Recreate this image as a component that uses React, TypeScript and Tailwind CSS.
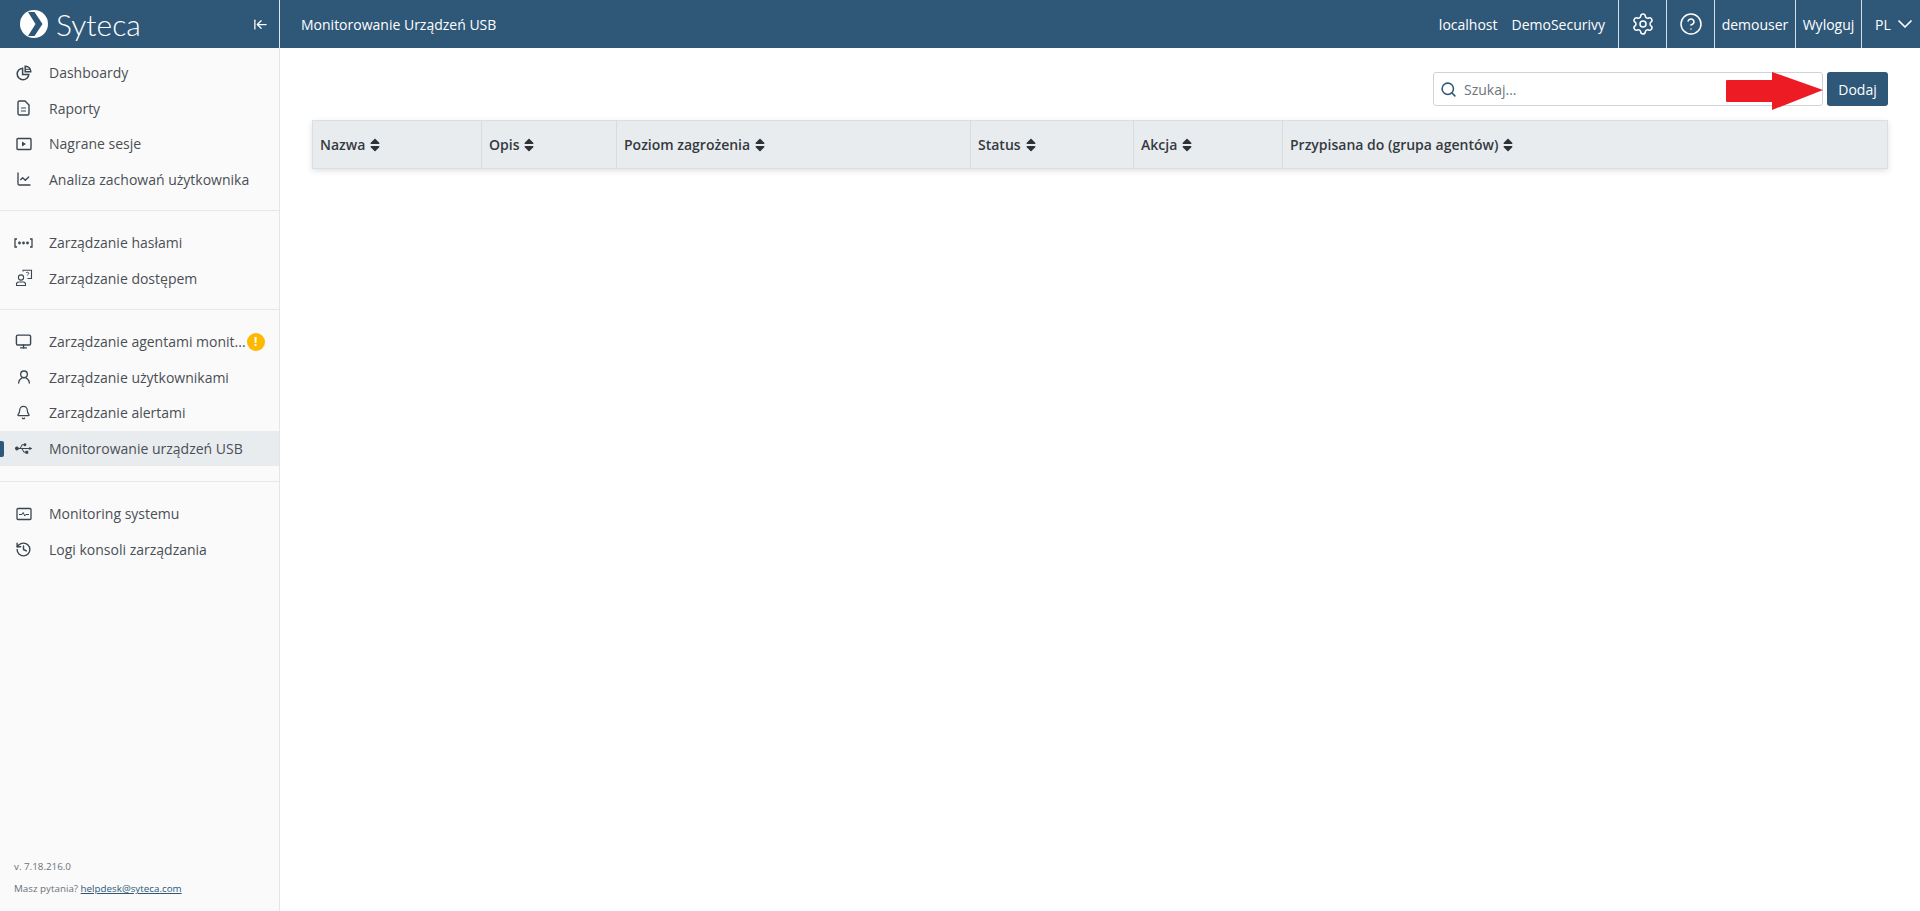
import { ArrowLeftToLine, Bell, ChartLine, ChevronDown, CircleHelp, History, Monitor, Search, Settings, UserRound } from "lucide-react";
import type { ReactNode } from "react";
import { FaSort, FaUsb } from "react-icons/fa";

function PieIcon() {
    return (
        <svg width="16" height="16" viewBox="0 0 16 16" fill="none" stroke="currentColor" strokeWidth="1.5">
            <path d="M6.600 3.200a5.800 5.800 0 1 0 6.200 6.200H6.600z" />
            <path d="M9.200 1.200a5.400 5.400 0 0 1 5.600 5.600H9.200z" />
            <path d="M9.500 4.300h5" strokeWidth="1" />
        </svg>
    );
}

function ReportIcon() {
    return (
        <svg width="13" height="16" viewBox="0 0 13 16" fill="none" stroke="currentColor" strokeWidth="1.4">
            <path d="M2.500 1h5.500l4 4v8.500a1.500 1.500 0 0 1-1.500 1.500h-8A1.500 1.500 0 0 1 1 13.500v-11A1.500 1.500 0 0 1 2.500 1z" />
            <path d="M4 8h5M4 11h5" strokeWidth="1.200" />
        </svg>
    );
}

function PlayBoxIcon() {
    return (
        <svg width="16" height="14" viewBox="0 0 16 14" fill="none">
            <rect x="1" y="1.500" width="14" height="11" rx="1" stroke="currentColor" strokeWidth="1.400" />
            <path d="M6 4.500v5l4-2.500z" fill="currentColor" />
        </svg>
    );
}

function PulseBoxIcon() {
    return (
        <svg width="16" height="14" viewBox="0 0 16 14" fill="none">
            <rect x="1" y="1.500" width="14" height="11" rx="1" stroke="currentColor" strokeWidth="1.300" />
            <path d="M3 7.500h3l1.200-2 1.600 3.500 1-1.500H13" stroke="currentColor" strokeWidth="1" />
        </svg>
    );
}

function PasswordIcon() {
    return (
        <svg width="19" height="10" viewBox="0 0 19 10" fill="none" stroke="currentColor" strokeWidth="1.300">
            <path d="M3 1H1v8h2M16 1h2v8h-2" />
            <circle cx="5.500" cy="5" r="1.400" fill="currentColor" stroke="none" />
            <circle cx="9.500" cy="5" r="1.400" fill="currentColor" stroke="none" />
            <circle cx="13.500" cy="5" r="1.400" fill="currentColor" stroke="none" />
        </svg>
    );
}

function AccessIcon() {
    return (
        <svg width="18" height="18" viewBox="0 0 18 18" fill="none" stroke="currentColor" strokeWidth="1.100">
            <circle cx="6" cy="8.500" r="2.600" />
            <path d="M1.500 16.500v-1.200c0-1.500 1-2.300 2.300-2.300h4.400c1.300 0 2.300.8 2.300 2.300v1.200z" />
            <path d="M8 2.500V1.200h8.500v8.300h-4" />
            <path d="M11 4c.4-1 2.600-1 2.800.2.200 1-1.400 1.100-1.400 2.200" strokeWidth="1" />
        </svg>
    );
}

function NavItem({ icon, label, active, badge }: { icon: ReactNode; label: string; active?: boolean; badge?: boolean }) {
    return (
        <div className={`relative flex h-[35.5px] items-center ${active ? "bg-[#e9ecef]" : ""}`}>
            {active && <span className="absolute left-0 top-[10px] h-[16px] w-[4px] rounded-r-[2px] bg-[#2f5777]"></span>}
            <span className="flex w-[49px] shrink-0 justify-center pr-[2px] text-[#3a4650]">{icon}</span>
            <span className="text-[14px] text-[#4a4f55]">{label}</span>
            {badge && (
                <span className="ml-[1px] flex h-[18px] w-[18px] shrink-0 items-center justify-center rounded-full bg-[#ffb800] text-[12px] font-bold text-white">
                    !
                </span>
            )}
        </div>
    );
}

function HeaderCell({ label, width }: { label: string; width: string }) {
    return (
        <div className={`flex h-full items-center gap-[2px] border-r border-[#d8dce0] pl-[7px] text-[14px] font-semibold text-[#343a40] last:border-r-0 ${width}`}>
            {label}
            <FaSort className="text-[16px] text-[#2b3238]" />
        </div>
    );
}

export default function App() {
    return (
        <div className="flex h-screen bg-white font-['Open_Sans',sans-serif]">
            <aside className="flex w-[280px] shrink-0 flex-col border-r border-[#e3e5e8] bg-[#fafafa]">
                <div className="flex h-[48px] shrink-0 items-center bg-[#2f5777] pl-[20px] pr-[11px]">
                    <svg width="28" height="28" viewBox="0 0 28 28">
                        <circle cx="14" cy="14" r="14" fill="#fff" />
                        <path fill="#2f5777" d="M8 2h6.500l8 12-8 12H8l7.500-12z" />
                    </svg>
                    <span className="ml-[8px] font-['Lato',sans-serif] text-[30px] font-light leading-none text-white">Syteca</span>
                    <ArrowLeftToLine size={15} className="ml-auto text-white" />
                </div>
                <nav className="flex flex-1 flex-col pt-[7px]">
                    <NavItem icon={<PieIcon />} label="Dashboardy" />
                    <NavItem icon={<ReportIcon />} label="Raporty" />
                    <NavItem icon={<PlayBoxIcon />} label="Nagrane sesje" />
                    <NavItem icon={<ChartLine size={16} />} label="Analiza zachowań użytkownika" />
                    <div className="mb-[14px] mt-[13px] border-t border-[#e5e7e9]"></div>
                    <NavItem icon={<PasswordIcon />} label="Zarządzanie hasłami" />
                    <NavItem icon={<AccessIcon />} label="Zarządzanie dostępem" />
                    <div className="mb-[14px] mt-[13px] border-t border-[#e5e7e9]"></div>
                    <NavItem icon={<Monitor size={17} />} label="Zarządzanie agentami monit..." badge />
                    <NavItem icon={<UserRound size={16} />} label="Zarządzanie użytkownikami" />
                    <NavItem icon={<Bell size={15} />} label="Zarządzanie alertami" />
                    <NavItem icon={<FaUsb className="text-[17px]" />} label="Monitorowanie urządzeń USB" active />
                    <div className="mb-[14px] mt-[15px] border-t border-[#e5e7e9]"></div>
                    <NavItem icon={<PulseBoxIcon />} label="Monitoring systemu" />
                    <NavItem icon={<History size={17} />} label="Logi konsoli zarządzania" />
                    <div className="mt-auto pb-[14px] pl-[14px] text-[9.8px] text-[#6b7278]">
                        <div className="mb-[8px]">v. 7.18.216.0</div>
                        <div>
                            Masz pytania? <a className="text-[#2f5777] underline">helpdesk@syteca.com</a>
                        </div>
                    </div>
                </nav>
            </aside>
            <main className="flex min-w-0 flex-1 flex-col">
                <header className="flex h-[48px] shrink-0 items-center bg-[#2f5777] text-[14px] text-white">
                    <span className="pl-[21px]">Monitorowanie Urządzeń USB</span>
                    <span className="ml-auto">localhost</span>
                    <span className="ml-[14px] pr-[13px]">DemoSecurivy</span>
                    <div className="flex h-full w-[48px] items-center justify-center border-l border-[#d5dde4]">
                        <Settings size={24} strokeWidth={1.5} />
                    </div>
                    <div className="flex h-full w-[48px] items-center justify-center border-l border-[#d5dde4]">
                        <CircleHelp size={24} strokeWidth={1.5} />
                    </div>
                    <div className="flex h-full w-[81px] items-center justify-center border-l border-[#d5dde4]">demouser</div>
                    <div className="flex h-full w-[66px] items-center justify-center border-l border-[#d5dde4]">Wyloguj</div>
                    <div className="flex h-full w-[59px] items-center gap-[2px] border-l border-[#d5dde4] pl-[13px]">
                        PL
                        <ChevronDown size={24} strokeWidth={1.7} />
                    </div>
                </header>
                <div className="relative flex-1 px-[32px] pt-[24px]">
                    <div className="flex h-[34px] justify-end gap-[4px]">
                        <div className="flex w-[390px] items-center gap-[7px] rounded-[3px] border border-[#ced4da] pl-[6px] text-[14px] text-[#6c757d]">
                            <Search size={17} className="text-[#2f5777]" strokeWidth={2.2} />
                            Szukaj...
                        </div>
                        <button className="w-[61px] rounded-[3px] bg-[#2f5777] text-[14px] text-white">Dodaj</button>
                    </div>
                    <div className="mt-[14px] flex h-[49px] border border-[#dcdfe2] bg-[#e9ecef] shadow-[0_2px_6px_rgba(0,0,0,0.12)]">
                        <HeaderCell label="Nazwa" width="w-[169px]" />
                        <HeaderCell label="Opis" width="w-[135px]" />
                        <HeaderCell label="Poziom zagrożenia" width="w-[354px]" />
                        <HeaderCell label="Status" width="w-[163px]" />
                        <HeaderCell label="Akcja" width="w-[149px]" />
                        <HeaderCell label="Przypisana do (grupa agentów)" width="flex-1" />
                    </div>
                    {/* red annotation arrow pasted over the screenshot */}
                    <svg className="absolute left-[1446px] top-[24px]" width="98" height="38" viewBox="0 0 98 38">
                        <path fill="#ed1c24" d="M1 8h45V0l51 18-51 20v-8H1a1 1 0 0 1-1-1V9a1 1 0 0 1 1-1z" />
                    </svg>
                </div>
            </main>
        </div>
    );
}
